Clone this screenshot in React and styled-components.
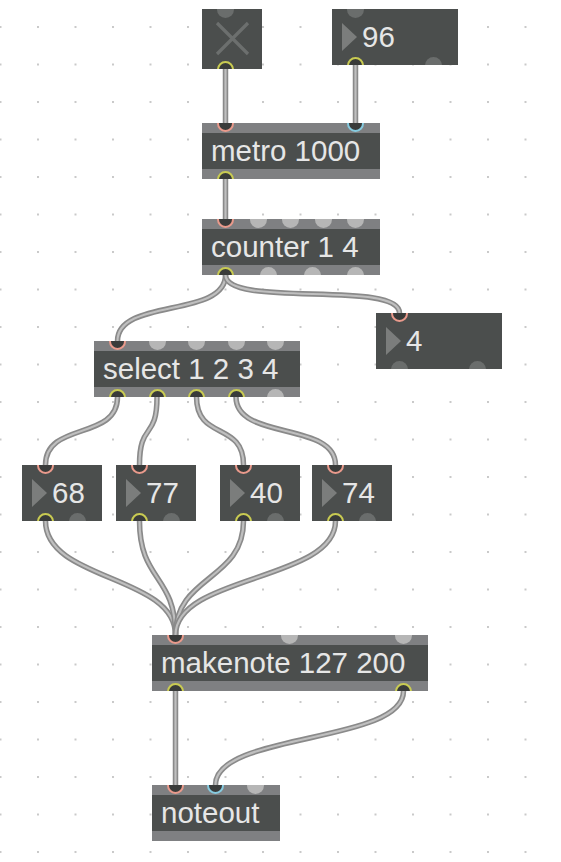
import React from 'react'
import styled, { createGlobalStyle } from 'styled-components'

const GlobalStyle = createGlobalStyle`
  html, body {
    margin: 0;
    padding: 0;
    background: #ffffff;
    overflow: hidden;
  }
`

const STRIP = '#7f8082'
const BODY = '#4b4e4d'

const Canvas = styled.div`
  position: relative;
  width: 561px;
  height: 862px;
  background: #ffffff;
  overflow: hidden;
  font-family: "Liberation Sans", Arial, sans-serif;
`

const CordLayer = styled.svg`
  position: absolute;
  left: 0;
  top: 0;
  width: 561px;
  height: 862px;
`

// patcher nodes sit on a free canvas, so they are placed by coordinates
const Node = styled.div`
  position: absolute;
  left: ${p => p.$x}px;
  top: ${p => p.$y}px;
  width: ${p => p.$w}px;
  height: ${p => p.$h || 56}px;
  overflow: hidden;
  box-sizing: border-box;
  background: ${p => (p.$strips ? STRIP : BODY)};
`

const ObjectBody = styled.div`
  margin-top: 10px;
  height: 36px;
  background: ${BODY};
  display: flex;
  align-items: center;
  padding-left: 9px;
  color: #e6e6e6;
  font-size: 29.5px;
  white-space: nowrap;
`

const NumberBody = styled.div`
  height: 100%;
  display: flex;
  align-items: center;
  padding-left: 10px;
  color: #e6e6e6;
  font-size: 29.5px;
  white-space: nowrap;
`

const Arrow = styled.span`
  width: 0;
  height: 0;
  border-left: 15px solid #7b7d7c;
  border-top: 14.5px solid transparent;
  border-bottom: 14.5px solid transparent;
  margin-right: 5px;
  margin-top: -1px;
`

const ToggleX = styled.svg`
  position: absolute;
  left: 0;
  top: 0;
  width: 60px;
  height: 60px;
`

const portColors = {
  hot: '#e99a8c',
  cold: '#86cbe0',
  out: '#c9cb52',
}

const Port = styled.span`
  position: absolute;
  left: ${p => p.$left - 8.5}px;
  top: ${p => (p.$side === 'top' ? -8.5 : p.$h - 8.5)}px;
  width: 17px;
  height: 17px;
  border-radius: 50%;
  box-sizing: border-box;
  background: ${p =>
    p.$state === 'free' ? '#b6b6b6' : p.$state === 'freeDark' ? '#6a6d6c' : '#393b3a'};
  border: ${p => (portColors[p.$state] ? `2px solid ${portColors[p.$state]}` : 'none')};
`

const nodes = [
  { id: 'toggle', kind: 'toggle', x: 202, y: 9, w: 60, h: 60, ins: 1, outs: 1 },
  { id: 'n96', kind: 'number', x: 332, y: 9, w: 126, text: '96', ins: 1, outs: 2 },
  { id: 'metro', kind: 'object', x: 202, y: 123, w: 178, text: 'metro 1000', ins: 2, outs: 1 },
  { id: 'counter', kind: 'object', x: 202, y: 219, w: 178, text: 'counter 1 4', ins: 5, outs: 4 },
  { id: 'n4', kind: 'number', x: 376, y: 313, w: 126, text: '4', ins: 1, outs: 2 },
  { id: 'select', kind: 'object', x: 94, y: 341, w: 206, text: 'select 1 2 3 4', ins: 5, outs: 5 },
  { id: 'n68', kind: 'number', x: 22, y: 465, w: 80, text: '68', ins: 1, outs: 2 },
  { id: 'n77', kind: 'number', x: 116, y: 465, w: 80, text: '77', ins: 1, outs: 2 },
  { id: 'n40', kind: 'number', x: 220, y: 465, w: 80, text: '40', ins: 1, outs: 2 },
  { id: 'n74', kind: 'number', x: 312, y: 465, w: 80, text: '74', ins: 1, outs: 2 },
  { id: 'makenote', kind: 'object', x: 152, y: 635, w: 276, text: 'makenote 127 200', ins: 3, outs: 2 },
  { id: 'noteout', kind: 'object', x: 152, y: 785, w: 128, text: 'noteout', ins: 3, outs: 0 },
]

const cords = [
  ['toggle', 0, 'metro', 0],
  ['n96', 0, 'metro', 1],
  ['metro', 0, 'counter', 0],
  ['counter', 0, 'select', 0],
  ['counter', 0, 'n4', 0],
  ['select', 0, 'n68', 0],
  ['select', 1, 'n77', 0],
  ['select', 2, 'n40', 0],
  ['select', 3, 'n74', 0],
  ['n68', 0, 'makenote', 0],
  ['n77', 0, 'makenote', 0],
  ['n40', 0, 'makenote', 0],
  ['n74', 0, 'makenote', 0],
  ['makenote', 0, 'noteout', 0],
  ['makenote', 1, 'noteout', 1],
]

const byId = Object.fromEntries(nodes.map(n => [n.id, n]))

const portX = (w, n, i) => (n === 1 ? 23.5 : 23.5 + (i * (w - 48)) / (n - 1))

const connected = (id, side, i) =>
  cords.some(c => (side === 'out' ? c[0] === id && c[1] === i : c[2] === id && c[3] === i))

function cordPath([from, o, to, i]) {
  const a = byId[from]
  const b = byId[to]
  const x1 = a.x + portX(a.w, a.outs, o)
  const y1 = a.y + (a.h || 56)
  const x2 = b.x + portX(b.w, b.ins, i)
  const y2 = b.y
  const k = 20 + 0.35 * Math.abs(y2 - y1)
  return `M${x1} ${y1} C${x1} ${y1 + k} ${x2} ${y2 - k} ${x2} ${y2}`
}

function Ports({ node }) {
  const h = node.h || 56
  const dark = node.kind !== 'object'
  const list = []
  for (let i = 0; i < node.ins; i++) {
    const on = connected(node.id, 'in', i)
    list.push(
      <Port
        key={'i' + i}
        $side="top"
        $h={h}
        $left={portX(node.w, node.ins, i)}
        $state={on ? (i === 0 ? 'hot' : 'cold') : dark ? 'freeDark' : 'free'}
      />
    )
  }
  for (let i = 0; i < node.outs; i++) {
    const on = connected(node.id, 'out', i)
    list.push(
      <Port
        key={'o' + i}
        $side="bottom"
        $h={h}
        $left={portX(node.w, node.outs, i)}
        $state={on ? 'out' : dark ? 'freeDark' : 'free'}
      />
    )
  }
  return list
}

function PatchNode({ node }) {
  return (
    <Node $x={node.x} $y={node.y} $w={node.w} $h={node.h} $strips={node.kind === 'object'}>
      {node.kind === 'object' && <ObjectBody>{node.text}</ObjectBody>}
      {node.kind === 'number' && (
        <NumberBody>
          <Arrow />
          {node.text}
        </NumberBody>
      )}
      {node.kind === 'toggle' && (
        <ToggleX viewBox="0 0 60 60">
          <path d="M15 14 L46 45 M46 14 L15 45" stroke="#6c6f6e" strokeWidth="3.2" fill="none" />
        </ToggleX>
      )}
      <Ports node={node} />
    </Node>
  )
}

export default function App() {
  return (
    <Canvas>
      <GlobalStyle />
      <CordLayer viewBox="0 0 561 862">
        <defs>
          <pattern id="grid" x="37" y="26" width="37.5" height="37.5" patternUnits="userSpaceOnUse">
            <rect x="0" y="0" width="2" height="2" fill="#c9c9c9" />
          </pattern>
        </defs>
        <rect width="561" height="862" fill="url(#grid)" />
        {cords.map((c, i) => (
          <g key={i} fill="none">
            <path d={cordPath(c)} stroke="#8a8a8a" strokeWidth="5.5" />
            <path d={cordPath(c)} stroke="#bfbfbf" strokeWidth="2.2" />
          </g>
        ))}
      </CordLayer>
      {nodes.map(n => (
        <PatchNode key={n.id} node={n} />
      ))}
    </Canvas>
  )
}
